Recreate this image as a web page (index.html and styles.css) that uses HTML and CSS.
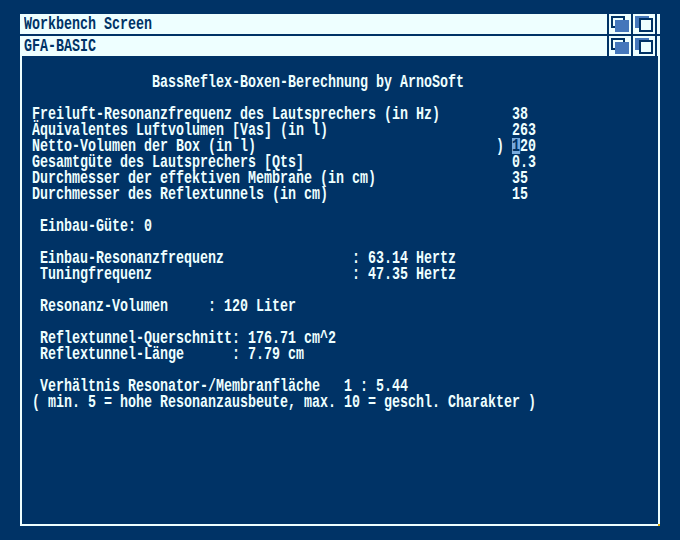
FILE: index.html
```html
<!DOCTYPE html>
<html lang="de">
<head>
<meta charset="utf-8">
<title>GFA-BASIC</title>
<link rel="stylesheet" href="styles.css">
</head>
<body>
<svg class="defs" width="0" height="0" aria-hidden="true">
  <symbol id="depth-front" viewBox="0 0 22 20">
    <rect x="3" y="3" width="12" height="10" fill="none" stroke="#003366" stroke-width="2"/>
    <rect x="6" y="6" width="14" height="12" fill="#4477bb"/>
  </symbol>
  <symbol id="depth-back" viewBox="0 0 22 20">
    <rect x="2" y="2" width="14" height="12" fill="#4477bb"/>
    <rect x="7" y="5" width="12" height="12" fill="#eeffff" stroke="#003366" stroke-width="2"/>
  </symbol>
</svg>
<div class="screen">
  <div class="bar">
    <div class="title"><span class="label">Workbench Screen</span></div>
    <div class="gadget"><svg width="22" height="20"><use href="#depth-front"/></svg></div>
    <div class="gadget"><svg width="22" height="20"><use href="#depth-back"/></svg></div>
    <div class="sliver"></div>
  </div>
  <div class="window">
    <div class="bar">
      <div class="title"><span class="label">GFA-BASIC</span></div>
      <div class="gadget"><svg width="22" height="20"><use href="#depth-front"/></svg></div>
      <div class="gadget"><svg width="22" height="20"><use href="#depth-back"/></svg></div>
      <div class="sliver"></div>
    </div>
    <div class="body">
<pre class="term">               BassReflex-Boxen-Berechnung by ArnoSoft

Freiluft-Resonanzfrequenz des Lautsprechers (in Hz)         38
Äquivalentes Luftvolumen [Vas] (in l)                       263
Netto-Volumen der Box (in l)                              ) <span class="cursor">1</span>20
Gesamtgüte des Lautsprechers [Qts]                          0.3
Durchmesser der effektiven Membrane (in cm)                 35
Durchmesser des Reflextunnels (in cm)                       15

 Einbau-Güte: 0

 Einbau-Resonanzfrequenz                : 63.14 Hertz
 Tuningfrequenz                         : 47.35 Hertz

 Resonanz-Volumen     : 120 Liter

 Reflextunnel-Querschnitt: 176.71 cm^2
 Reflextunnel-Länge      : 7.79 cm

 Verhältnis Resonator-/Membranfläche   1 : 5.44
( min. 5 = hohe Resonanzausbeute, max. 10 = geschl. Charakter )</pre>
    </div>
    <span class="corner"></span>
  </div>
</div>
</body>
</html>
```
FILE: styles.css
```css
html, body {
  margin: 0;
  height: 540px;
  overflow: hidden;
  background: #003366;
}

.defs {
  position: absolute;
}

.screen {
  padding: 14px 20px;
  display: flex;
  flex-direction: column;
  gap: 2px;
  height: 540px;
  box-sizing: border-box;
}

.bar {
  display: flex;
  height: 20px;
  gap: 2px;
  flex: none;
}

.title {
  flex: 1;
  background: #eeffff;
  padding-left: 4px;
  height: 20px;
  overflow: hidden;
}

.label,
.term {
  font-family: "Liberation Mono", monospace;
  font-weight: 700;
  font-size: 18px;
  line-height: 16px;
  white-space: pre;
  display: block;
  transform: scaleX(0.7407);
  transform-origin: 0 0;
}

.label {
  color: #003366;
  padding-top: 2px;
}

.gadget {
  width: 22px;
  height: 20px;
  background: #eeffff;
  flex: none;
}

.gadget svg {
  display: block;
}

.sliver {
  width: 3px;
  background: #eeffff;
  flex: none;
}

.window {
  position: relative;
  display: flex;
  flex-direction: column;
  width: 640px;
  height: 490px;
  box-sizing: border-box;
}

.body {
  flex: 1;
  border: 2px solid #eeffff;
  border-top: 0;
  padding: 18px 0 0 10px;
  overflow: hidden;
}

.term {
  margin: 0;
  color: #eeffff;
}

.cursor {
  display: inline-block;
  height: 16px;
  vertical-align: top;
  background: #77aadd;
  color: #003366;
}

.corner {
  position: absolute;
  right: 0;
  bottom: 0;
  width: 2px;
  height: 2px;
  background: #ddaa00;
}
```
